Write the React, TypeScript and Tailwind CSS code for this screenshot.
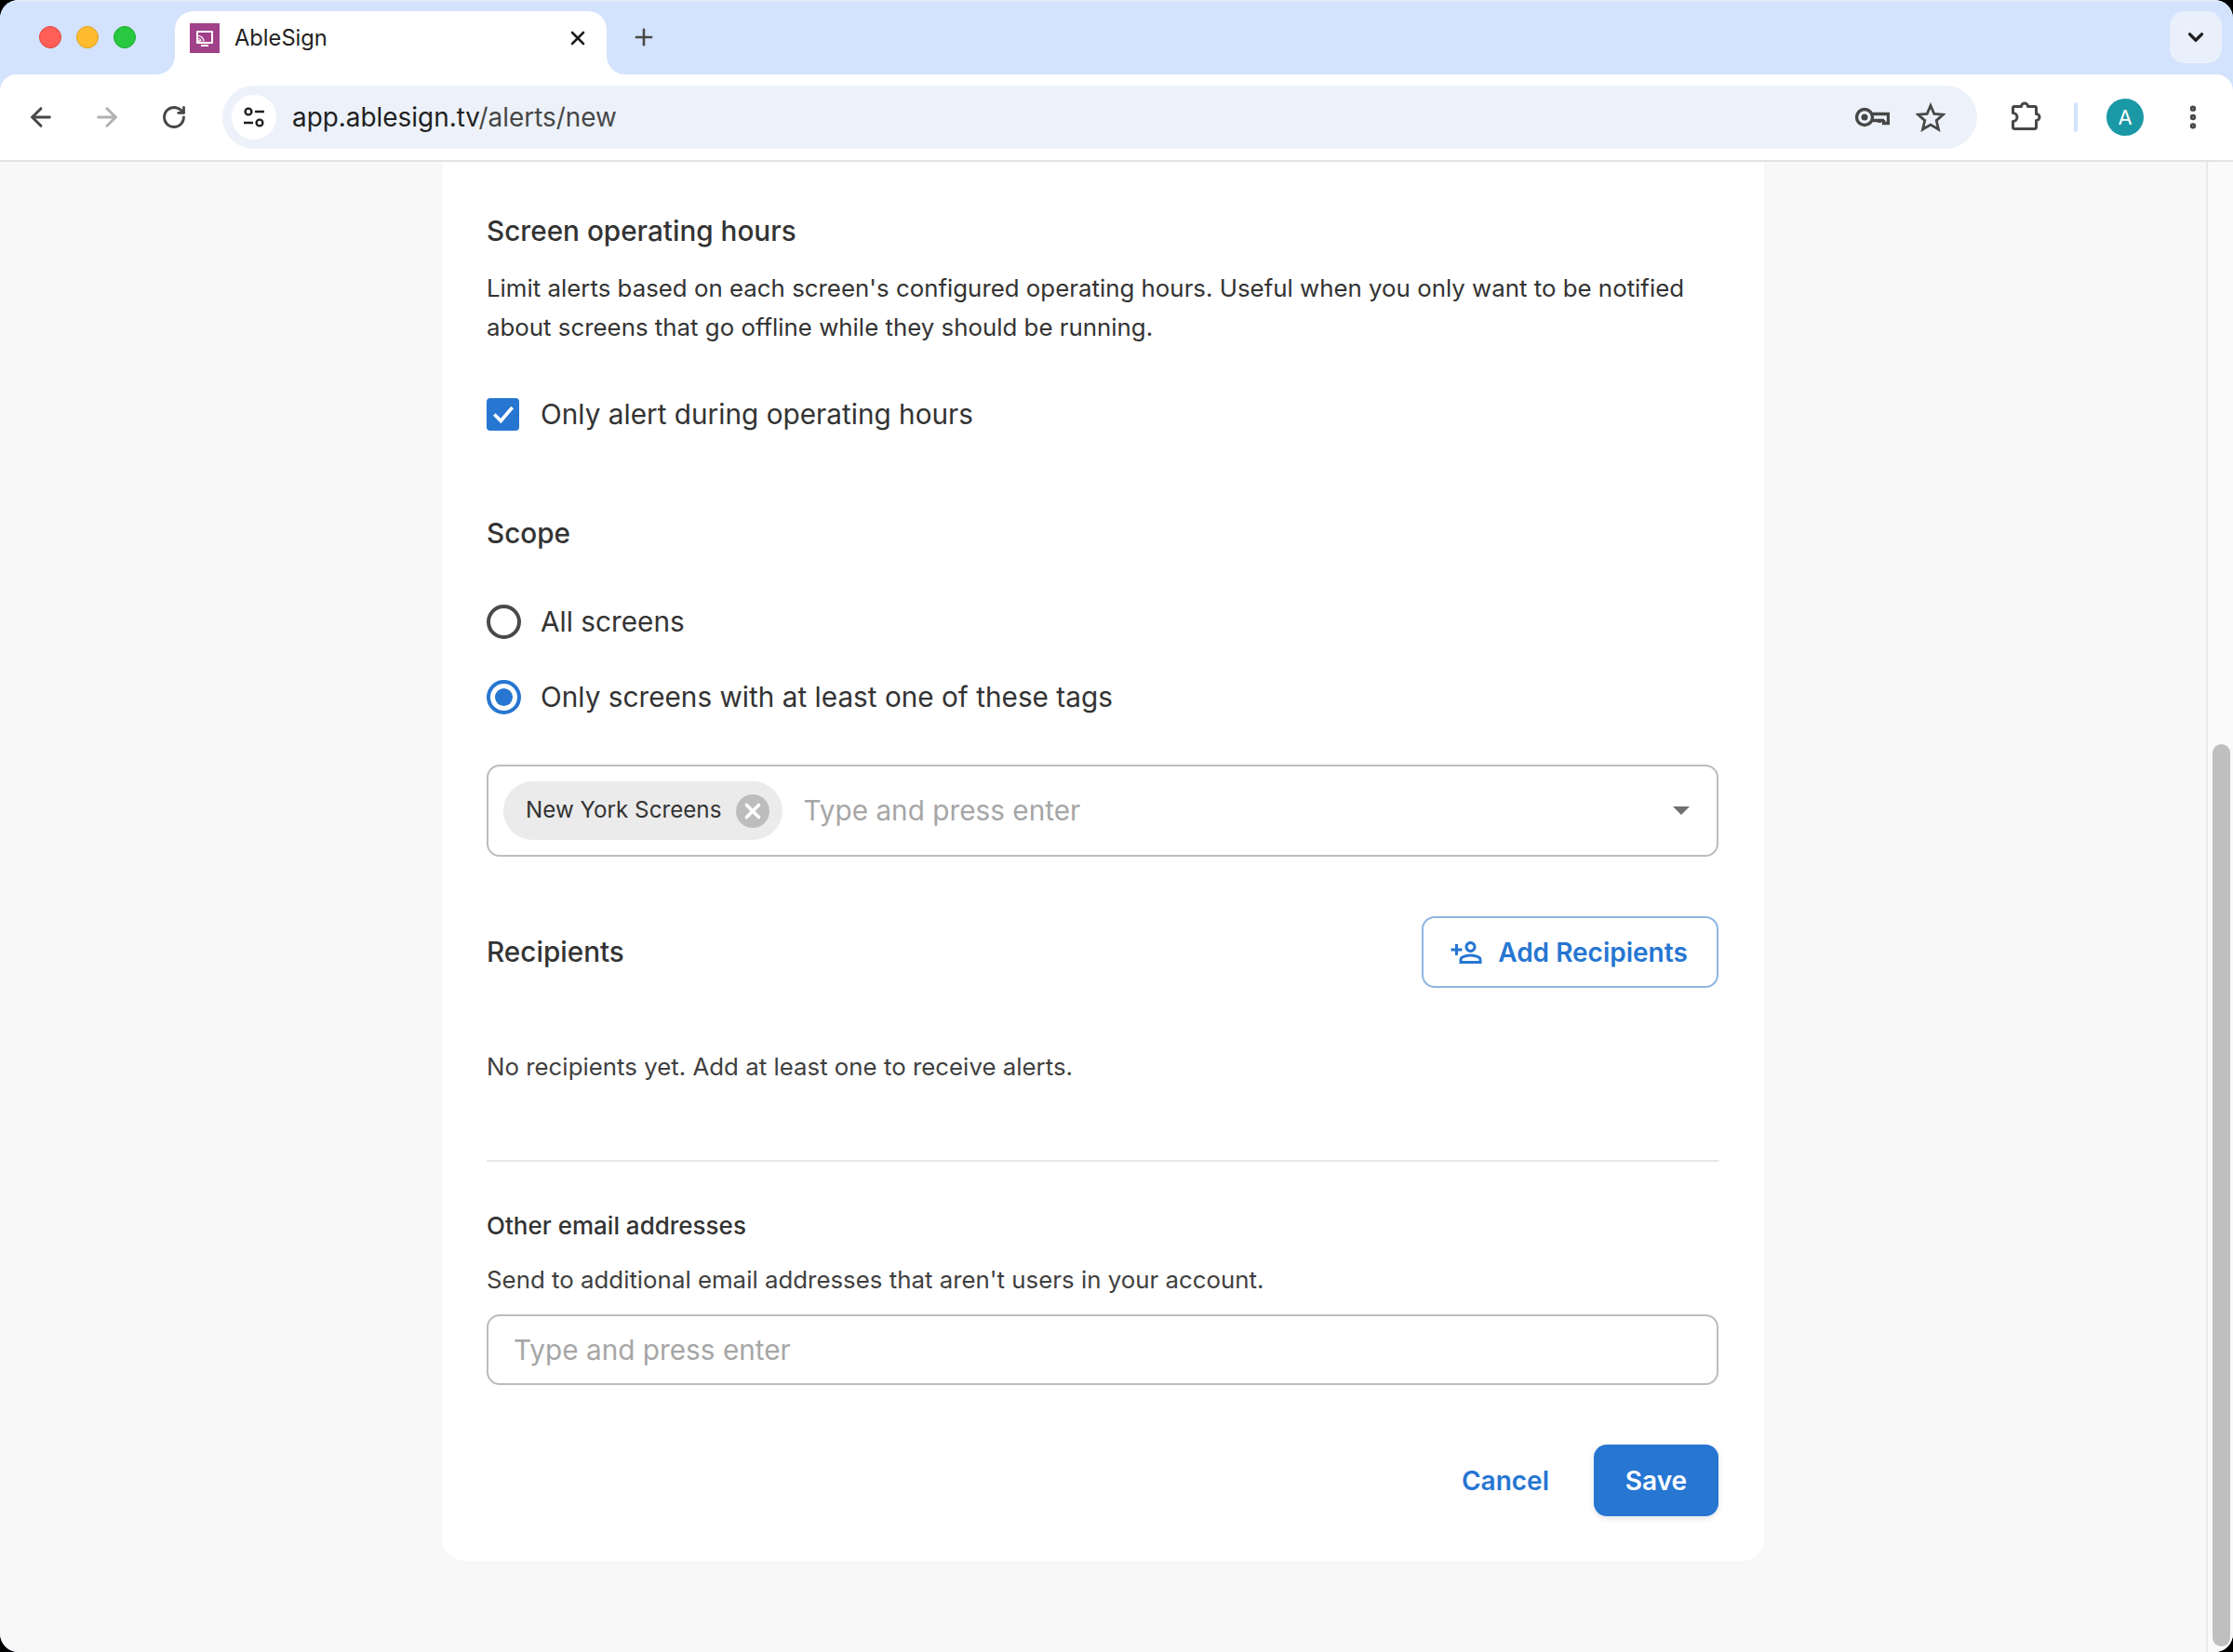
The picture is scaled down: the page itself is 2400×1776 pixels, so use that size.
import { ArrowLeft, ArrowRight, ChevronDown, EllipsisVertical, Plus, RotateCw, X } from "lucide-react";
import { MdOutlinePersonAddAlt } from "react-icons/md";

function TabStrip() {
  return (
    <div className="h-[80px] shrink-0 bg-[#d3e3fd] border-t-2 border-[#e1ebfb] flex items-end pl-[42px] pr-[12px]">
      <div className="flex items-center gap-[16px] h-[68px] pb-[12px] mr-[42px]">
        <span className="block w-[24px] h-[24px] rounded-full bg-[#ff5f57] border border-[#e0443e]" />
        <span className="block w-[24px] h-[24px] rounded-full bg-[#febc2e] border border-[#dea123]" />
        <span className="block w-[24px] h-[24px] rounded-full bg-[#28c840] border border-[#1aab29]" />
      </div>
      <div className="relative w-[464px] h-[68px] bg-white rounded-t-[20px] flex items-center pl-[16px] pr-[19px] pb-[10px]">
        <span className="absolute left-[-20px] bottom-0 w-[20px] h-[20px] bg-white">
          <span className="block w-full h-full bg-[#d3e3fd] rounded-br-[20px]" />
        </span>
        <span className="absolute right-[-20px] bottom-0 w-[20px] h-[20px] bg-white">
          <span className="block w-full h-full bg-[#d3e3fd] rounded-bl-[20px]" />
        </span>
        <svg width="32" height="32" viewBox="0 0 32 32" className="shrink-0">
          <rect width="32" height="32" fill="#a0418a" />
          <rect x="7" y="8" width="18" height="14" rx="1" fill="#fff" />
          <rect x="9" y="10" width="14" height="10" fill="#a0418a" />
          <rect x="12" y="23" width="8" height="2" fill="#fff" />
          <path d="M9 13.5a6 6 0 0 1 6 6M9 16.5a3 3 0 0 1 3 3" stroke="#fff" strokeWidth="1.2" fill="none" />
          <circle cx="10" cy="19" r="1" fill="#fff" />
        </svg>
        <span className="ml-[16px] flex-1 text-[23.7px] text-[#1f1f1f]">AbleSign</span>
        <X size={24} strokeWidth={2.6} className="text-[#1f1f1f]" />
      </div>
      <Plus size={28} strokeWidth={2.2} className="text-[#474747] ml-[26px] mb-[26px]" />
      <div className="ml-auto mb-[12px] w-[56px] h-[56px] rounded-[16px] bg-[#e9f0fc] flex items-center justify-center">
        <ChevronDown size={26} strokeWidth={3} className="text-[#1f1f1f]" />
      </div>
    </div>
  );
}

function Toolbar() {
  return (
    <div className="h-[94px] shrink-0 bg-white rounded-t-[18px] border-b-2 border-[#e3e3e3] flex items-center pl-[28px] pr-[30px]">
      <ArrowLeft size={32} strokeWidth={2.2} className="text-[#474747] shrink-0" />
      <ArrowRight size={32} strokeWidth={2.2} className="text-[#b1b1b1] shrink-0 ml-[39px]" />
      <RotateCw size={28} strokeWidth={2.4} className="text-[#474747] shrink-0 ml-[42px]" />
      <div className="ml-[38px] h-[68px] w-[1886px] rounded-full bg-[#edf2fa] flex items-center pl-[10px] pr-[34px] shrink-0">
        <div className="w-[48px] h-[48px] rounded-full bg-white flex items-center justify-center shrink-0">
          <svg width="28" height="28" viewBox="0 0 28 28" fill="none" stroke="#1f1f1f" strokeWidth="2.4">
            <circle cx="8" cy="8" r="3.4" />
            <path d="M15 8h10M3 20h10" />
            <circle cx="20" cy="20" r="3.4" />
          </svg>
        </div>
        <div className="ml-[17px] pt-[2px] flex-1 text-[27.9px] text-[#1f1f1f]">
          app.ablesign.tv<span className="text-[#474747]">/alerts/new</span>
        </div>
        <svg width="38" height="24" viewBox="0 0 38 24" fill="none" stroke="#474747" strokeWidth="3.4" className="mr-[28px]">
          <circle cx="11" cy="12" r="8.5" />
          <circle cx="11" cy="12" r="3.5" fill="#474747" stroke="none" />
          <path d="M19 8.5H36.5V18.5H31.5V15M27 15V18M19 15.5H32" />
        </svg>
        <svg width="32" height="32" viewBox="0 0 32 32" fill="none" stroke="#474747" strokeWidth="2.8">
          <polygon points="16,3.5 19.8,12.4 29.5,13.1 22.2,19.6 24.5,29 16,24 7.5,29 9.8,19.6 2.5,13.1 12.2,12.4" />
        </svg>
      </div>
      <svg width="34" height="34" viewBox="0 0 34 34" fill="none" stroke="#474747" strokeWidth="3" strokeLinejoin="round" className="ml-[35px] shrink-0">
        <path d="M5 5.5H12.5a3.5 3.5 0 0 1 7 0H27a1.5 1.5 0 0 1 1.5 1.5V13.5a3.5 3.5 0 0 1 0 7V28a1.5 1.5 0 0 1-1.5 1.5H5a1.5 1.5 0 0 1-1.5-1.5V21.5a4.5 4.5 0 0 0 0-9V7A1.5 1.5 0 0 1 5 5.5z" />
      </svg>
      <div className="w-[4px] h-[32px] rounded-full bg-[#d3e3fd] ml-[35px] shrink-0" />
      <div className="w-[40px] h-[40px] rounded-full bg-[#1a98a6] text-white text-[22px] flex items-center justify-center ml-[31px] shrink-0">
        A
      </div>
      <EllipsisVertical size={32} strokeWidth={2.8} className="text-[#474747] ml-[37px] shrink-0" />
    </div>
  );
}

function RadioRow({ checked, label }: { checked?: boolean; label: string }) {
  return (
    <div className="flex items-center gap-[21px] h-[40px]">
      <span
        className={
          checked
            ? "w-[37px] h-[37px] rounded-full border-[4px] border-[#2676d2] flex items-center justify-center"
            : "w-[37px] h-[37px] rounded-full border-[4px] border-[#4a4a4a]"
        }
      >
        {checked && <span className="block w-[19px] h-[19px] rounded-full bg-[#2676d2]" />}
      </span>
      <span className="text-[29.75px]">{label}</span>
    </div>
  );
}

function AlertForm() {
  return (
    <div className="w-[1421px] h-[1504px] bg-white rounded-b-[24px] pl-[48px] pr-[49px] pt-[56px] text-[#333333]">
      <h2 className="text-[29.7px] font-medium leading-[36px]">Screen operating hours</h2>
      <p className="mt-[23px] text-[25.85px] leading-[42px]">
        Limit alerts based on each screen's configured operating hours. Useful when you only want to be notified
        <br />
        about screens that go offline while they should be running.
      </p>
      <div className="mt-[52px] flex items-center gap-[23px] h-[40px]">
        <span className="w-[35px] h-[35px] rounded-[4px] bg-[#2676d2] flex items-center justify-center">
          <svg width="28" height="28" viewBox="0 0 26 26" fill="none" stroke="#fff" strokeWidth="3.4">
            <path d="M4 13.5l6.5 6.5L22 6.5" />
          </svg>
        </span>
        <span className="text-[29.75px]">Only alert during operating hours</span>
      </div>

      <h2 className="mt-[90px] text-[29.7px] font-medium leading-[36px]">Scope</h2>
      <div className="mt-[57px]">
        <RadioRow label="All screens" />
      </div>
      <div className="mt-[41px]">
        <RadioRow checked label="Only screens with at least one of these tags" />
      </div>

      <div className="mt-[53px] h-[99px] rounded-[14px] border-2 border-[#bdbdbd] flex items-center pl-[16px] pr-[29px]">
        <div className="h-[63px] rounded-full bg-[#ebebeb] flex items-center pl-[24px] pr-[14px]">
          <span className="text-[24.2px]">New York Screens</span>
          <span className="ml-[16px] w-[36px] h-[36px] rounded-full bg-[#bdbdbd] flex items-center justify-center">
            <X size={26} strokeWidth={3.4} className="text-white" />
          </span>
        </div>
        <span className="ml-[22px] flex-1 text-[29.75px] text-[#a6a6a6]">Type and press enter</span>
        <span className="w-0 h-0 border-x-[9px] border-x-transparent border-t-[9px] border-t-[#6f6f6f]" />
      </div>

      <div className="mt-[64px] flex items-center justify-between">
        <h2 className="text-[29.7px] font-medium">Recipients</h2>
        <button className="h-[77px] w-[319px] rounded-[14px] border-2 border-[#8fb5e3] flex items-center justify-center gap-[16px] pr-[3px] text-[#2676d2] text-[28px] font-semibold">
          <MdOutlinePersonAddAlt size={36} className="-scale-x-100" />
          Add Recipients
        </button>
      </div>

      <p className="mt-[66px] text-[25.85px] leading-[38px] text-[#3f3f3f]">No recipients yet. Add at least one to receive alerts.</p>
      <div className="mt-[81px] h-[2px] bg-[#e8e8e8]" />

      <h3 className="mt-[53px] text-[26px] font-medium leading-[32px]">Other email addresses</h3>
      <p className="mt-[24px] text-[25.85px] leading-[36px] text-[#3f3f3f]">Send to additional email addresses that aren't users in your account.</p>
      <div className="mt-[19px] h-[76px] rounded-[14px] border-2 border-[#bdbdbd] flex items-center pl-[27px] text-[29.75px] text-[#a6a6a6]">
        Type and press enter
      </div>

      <div className="mt-[64px] flex items-center justify-end gap-[48px]">
        <button className="text-[28px] font-semibold text-[#2676d2]">Cancel</button>
        <button className="w-[134px] h-[77px] rounded-[14px] bg-[#2676d2] text-white text-[28px] font-semibold shadow-[0_2px_6px_rgba(0,0,0,0.12)]">
          Save
        </button>
      </div>
    </div>
  );
}

export default function App() {
  return (
    <div className="w-[2400px] h-[1776px] flex flex-col overflow-hidden bg-black font-['Inter',sans-serif]">
      <div className="flex-1 flex flex-col rounded-[20px] overflow-hidden bg-[#d3e3fd]">
        <TabStrip />
        <Toolbar />
        <div className="flex-1 flex min-h-0 bg-[#f8f8f8]">
          <main className="flex-1 flex justify-center items-start overflow-hidden">
            <AlertForm />
          </main>
          <div className="w-[29px] shrink-0 border-l-2 border-[#e8e8e8] bg-[#fafafa] flex flex-col justify-end pl-[5px] pr-[3px] pb-[6px]">
            <div className="h-[970px] rounded-full bg-[#bfbfbf]" />
          </div>
        </div>
      </div>
    </div>
  );
}
